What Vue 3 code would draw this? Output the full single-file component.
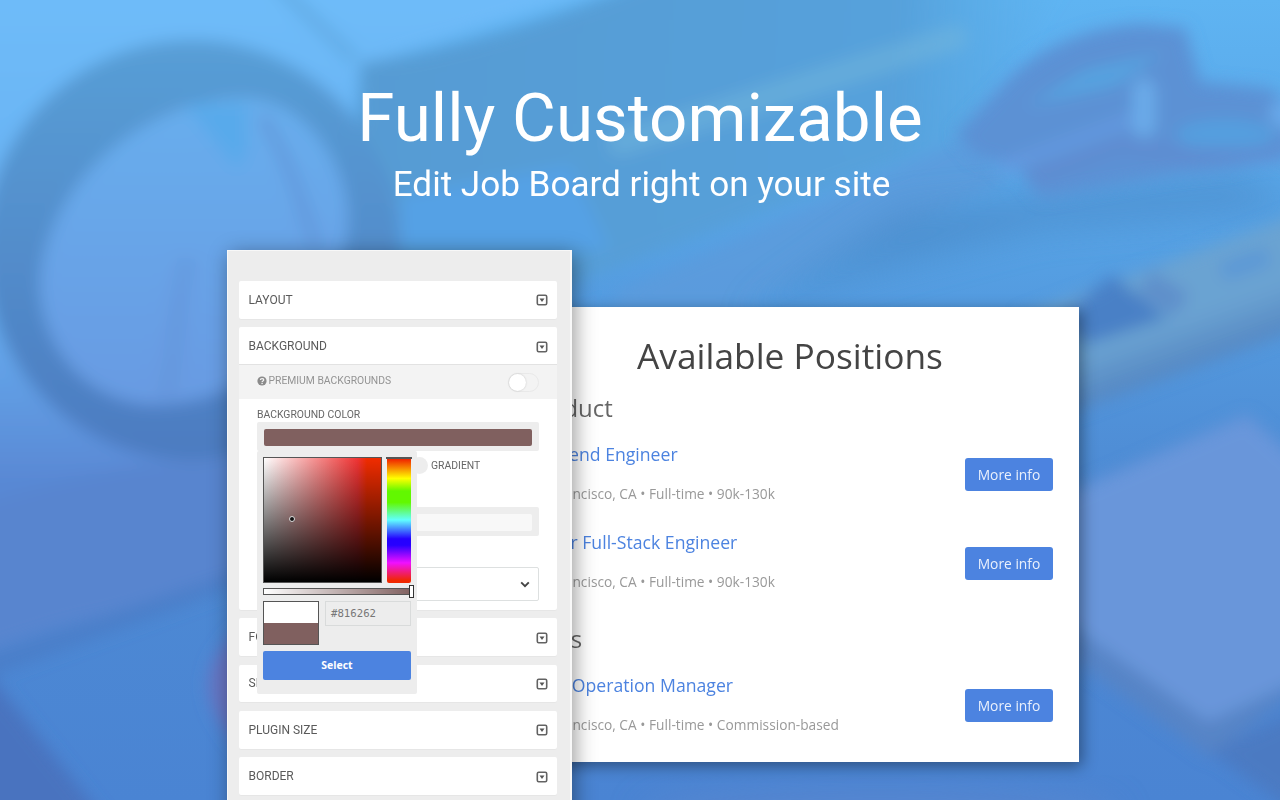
<script setup>
const groups = [
  {
    title: 'Product',
    jobs: [
      { title: 'Frontend Engineer', meta: 'San Francisco, CA • Full-time • 90k-130k' },
      { title: 'Senior Full-Stack Engineer', meta: 'San Francisco, CA • Full-time • 90k-130k' },
    ],
  },
  {
    title: 'Sales',
    jobs: [
      { title: 'Sales Operation Manager', meta: 'San Francisco, CA • Full-time • Commission-based' },
    ],
  },
]
const sections = ['LAYOUT', 'BACKGROUND', 'FONTS', 'SPACING', 'PLUGIN SIZE', 'BORDER']
</script>

<template>
  <main class="page">
    <svg class="backdrop" viewBox="0 0 1280 800" preserveAspectRatio="none" aria-hidden="true">
      <defs>
        <linearGradient id="sky" x1="0" y1="0" x2="0" y2="1">
          <stop offset="0" stop-color="#5fb4f2" />
          <stop offset="0.3" stop-color="#56a1e4" />
          <stop offset="0.6" stop-color="#4e8bd4" />
          <stop offset="1" stop-color="#4a84d3" />
        </linearGradient>
        <linearGradient id="tape" x1="0" y1="0" x2="0" y2="1">
          <stop offset="0" stop-color="#589ed6" />
          <stop offset="1" stop-color="#4c7bc0" />
        </linearGradient>
        <linearGradient id="hole" x1="0" y1="0" x2="0" y2="1">
          <stop offset="0" stop-color="#68aeed" />
          <stop offset="1" stop-color="#689ae2" />
        </linearGradient>
        <linearGradient id="shade" gradientUnits="userSpaceOnUse" x1="360" y1="0" x2="1080" y2="40">
          <stop offset="0" stop-color="#569bd3" />
          <stop offset="0.75" stop-color="#56a1db" />
          <stop offset="1" stop-color="#5bb0ea" stop-opacity="0" />
        </linearGradient>
        <linearGradient id="metal" gradientUnits="userSpaceOnUse" x1="1180" y1="262" x2="1215" y2="362">
          <stop offset="0.5" stop-color="#6ba3d2" />
          <stop offset="0.95" stop-color="#5688c3" />
        </linearGradient>
        <linearGradient id="left" x1="0" y1="0" x2="0" y2="1">
          <stop offset="0" stop-color="#6fbdfa" />
          <stop offset="0.5" stop-color="#67aef0" />
          <stop offset="0.75" stop-color="#5988d4" />
          <stop offset="1" stop-color="#5c8bd5" />
        </linearGradient>
        <filter id="soft" x="-20%" y="-20%" width="140%" height="140%"><feGaussianBlur stdDeviation="8" /></filter>
        <filter id="haze" x="-30%" y="-30%" width="160%" height="160%"><feGaussianBlur stdDeviation="18" /></filter>
      </defs>
      <rect width="1280" height="800" fill="url(#sky)" />
      <g filter="url(#soft)">
        <path d="M-40-40H700L360 66 300 560-40 655Z" fill="url(#left)" />
        <path d="M360 63Q520 40 690-40H1080L960 140 420 340 360 200Z" fill="url(#shade)" />
        <path d="M262-30 355 60" stroke="#60abe4" stroke-width="14" fill="none" opacity=".8" />
        <path d="M400 195 570 165 610 250H400Z" fill="#54a1e5" />
        <path d="M620 143 955 38" stroke="#70b4dc" stroke-width="24" opacity=".6" stroke-linecap="round" />
        <path d="M620 290 960 140 1010 180 730 310H610Z" fill="#5c9bdc" opacity=".85" />
        <path d="M-40 510C70 480 150 450 260 465V560L-40 660Z" fill="#5885cf" />
        <path d="M-40 665 240 568V585L-40 688Z" fill="#4a7bc5" opacity=".7" />
        <path d="M-30 650 105 820H-30Z" fill="#4873bf" />
        <ellipse cx="192" cy="250" rx="208" ry="210" fill="url(#tape)" />
        <path d="M235 98C300 94 342 155 348 210 352 300 270 405 150 405 75 400 32 330 41 268 55 180 140 104 235 98Z" fill="url(#hole)" />
        <path d="M185 104H247V148L238 170Z" fill="#58aaeb" />
        <path d="M262 116C288 158 300 195 316 248" stroke="#6292d6" stroke-width="12" fill="none" opacity=".65" />
        <path d="M188 258C174 310 178 348 165 400" stroke="#6493da" stroke-width="20" fill="none" opacity=".5" />
        <path d="M250 620C190 670 200 705 250 760Z" fill="#6874c2" />
      </g>
      <path d="M740 320 900 212 1240 178 1300 205 1040 228 840 280Z" fill="#4c8ccb" opacity=".8" filter="url(#haze)" />
      <g filter="url(#soft)">
        <path d="M955 135 1010 77Q1060 30 1140 24L1185 28 1200 82 1265 88Q1300 100 1295 145 1265 168 1180 174L1040 199 1018 168 975 158Z" fill="#5b91d4" />
        <path d="M1026 106 1085 70 1165 52 1115 86Z" fill="#57a3e0" />
        <ellipse cx="1225" cy="135" rx="50" ry="16" fill="#549fdf" />
        <path d="M1000 168 1145 115" stroke="#6399df" stroke-width="14" />
        <path d="M1144 90V126" stroke="#6aabe9" stroke-width="23" stroke-linecap="round" />
        <path d="M1275 105 1290 125" stroke="#69aaeb" stroke-width="22" />
        <path d="M1030 178 1120 145 1190 155 1290 155" stroke="#6488cd" stroke-width="16" fill="none" opacity=".5" />
        <path d="M1020 316 1320 206V322L1040 424Z" fill="url(#metal)" />
        <path d="M1060 318 1112 275 1168 318 1085 345Z" fill="#4880c6" />
        <path d="M1145 282 1182 305" stroke="#5f8fcb" stroke-width="26" />
        <path d="M1222 272 1268 256" stroke="#5c98d6" stroke-width="18" />
        <path d="M1040 505 1245 418 1310 475V680L1210 757 1060 650Z" fill="#5784c6" />
        <path d="M1040 505 1247 415 1310 470V675L1208 722 1050 610Z" fill="#6996da" />
        <path d="M1210 752 1320 700V830Z" fill="#4b7ac2" />
      </g>
      <ellipse cx="880" cy="815" rx="240" ry="25" fill="#6689cc" opacity=".5" filter="url(#haze)" />
    </svg>

    <header class="hero">
      <h1>Fully Customizable</h1>
      <p>Edit Job Board right on your site</p>
    </header>

    <div class="stage">
      <aside class="sidebar">
        <section v-for="name in sections" :key="name" class="panel">
          <div class="panel-head">
            <span>{{ name }}</span>
            <svg class="caret" viewBox="0 0 12 12">
              <rect x="1.3" y="1.3" width="9.4" height="9.4" rx="1.4" fill="none" stroke="#636363" stroke-width="1.6" />
              <path d="M3.5 4.4h5L6 7.9Z" fill="#555" />
            </svg>
          </div>
          <div v-if="name === 'BACKGROUND'" class="panel-body">
            <div class="premium">
              <svg class="help" viewBox="0 0 10 10">
                <circle cx="5" cy="5" r="4.6" fill="#8a8a8a" />
                <path d="M3.4 4C3.4 2.1 6.7 2.1 6.7 3.9 6.7 5 5.1 4.9 5.1 6.1" fill="none" stroke="#f3f3f3" stroke-width="1.3" />
                <rect x="4.4" y="6.8" width="1.4" height="1.3" fill="#f3f3f3" />
              </svg>
              <span>PREMIUM BACKGROUNDS</span>
              <i class="switch"></i>
            </div>
            <div class="fields">
              <label>BACKGROUND COLOR</label>
              <div class="well"><div class="fill brown"></div></div>
              <div class="gradient"><i class="knob"></i><span>GRADIENT</span></div>
              <div class="well second"><div class="fill"></div></div>
              <div class="select">
                <svg viewBox="0 0 10 7"><path d="M1.2 1.3 5 5.1 8.8 1.3" fill="none" stroke="#444" stroke-width="1.9" /></svg>
              </div>
              <div class="picker">
                <div class="top">
                  <div class="sat"><i class="cursor"></i></div>
                  <div class="hue"></div>
                </div>
                <div class="alpha"><i class="handle"></i></div>
                <div class="values">
                  <div class="swatch"></div>
                  <div class="hex">#816262</div>
                </div>
                <button class="choose">Select</button>
              </div>
            </div>
          </div>
        </section>
      </aside>

      <article class="board">
        <h2>Available Positions</h2>
        <section v-for="g in groups" :key="g.title" class="group">
          <h3>{{ g.title }}</h3>
          <div v-for="job in g.jobs" :key="job.title" class="job">
            <div>
              <h4>{{ job.title }}</h4>
              <p>{{ job.meta }}</p>
            </div>
            <button class="more">More info</button>
          </div>
        </section>
      </article>
    </div>
  </main>
</template>

<style>
body { margin: 0; overflow: hidden; }
</style>

<style scoped>
* { box-sizing: border-box; }
h1, h2, h3, h4, p { margin: 0; font-weight: 400; }
.page {
  position: relative;
  width: 1280px;
  height: 800px;
  overflow: hidden;
  font-family: Roboto, "Liberation Sans", sans-serif;
}
.backdrop { position: absolute; inset: 0; width: 100%; height: 100%; }
.hero { position: relative; height: 250px; padding-top: 78px; text-align: center; color: #fff; }
.hero h1 { font-size: 67.3px; line-height: 80px; white-space: nowrap; }
.hero p { padding-left: 3px; font-size: 35.1px; line-height: 42px; margin-top: 5px; white-space: nowrap; }
.stage { position: relative; display: flex; align-items: flex-start; padding-left: 227px; }
.sidebar {
  position: relative;
  z-index: 1;
  width: 345px;
  height: 570px;
  padding: 30px 13px 0 11px;
  background: #ededed;
  border: 1px solid #f8f8f8;
  border-width: 1px 2px 0 1px;
  box-shadow: 3px 4px 20px rgba(0, 0, 0, .4);
}
.panel { background: #fff; border-radius: 2px; margin-bottom: 8.4px; box-shadow: 0 1px 1px rgba(0, 0, 0, .03); }
.panel-head {
  display: flex;
  align-items: center;
  justify-content: space-between;
  height: 37.9px;
  padding: 0 9px 0 9.5px;
  font-size: 12px;
  color: #5a5a5a;
}
.caret { width: 12px; height: 12px; margin-top: 1px; }
.panel-body { height: 245.7px; }
.premium {
  display: flex;
  align-items: center;
  height: 35px;
  margin-top: -1px;
  padding: 0 18px 3px 18px;
  background: #f3f3f3;
  border-top: 1px solid #e2e2e2;
  font-size: 10.35px;
  color: #939393;
}
.help { width: 10px; height: 10px; margin-right: 1.5px; }
.switch {
  position: relative;
  top: 1.5px;
  width: 31px;
  height: 19px;
  margin-left: auto;
  border: 1px solid #e9e9e9;
  border-radius: 10px;
}
.switch::before, .knob {
  content: "";
  display: block;
  width: 17px;
  height: 17px;
  background: #fff;
  border-radius: 50%;
  box-shadow: 0 0 2px rgba(0, 0, 0, .2);
}
.fields { position: relative; padding: 8px 18.5px 0 18px; font-size: 10.4px; color: #666; }
.fields label { display: block; height: 15px; line-height: 15px; }
.well { height: 29px; padding: 7px 6.5px 5px; background: #ededed; border-radius: 2px; }
.fill { height: 17px; background: #f8f8f8; border-radius: 2px; }
.fill.brown { background: #80605f; }
.gradient { display: flex; align-items: center; gap: 3px; height: 17px; margin: 6px 0 0 154px; }
.knob { background: #ededed; box-shadow: none; }
.well.second { margin-top: 32.5px; }
.select {
  display: flex;
  align-items: center;
  justify-content: flex-end;
  height: 34px;
  margin-top: 31.5px;
  padding-right: 8px;
  border: 1px solid #dde0e0;
  border-radius: 2px;
}
.select svg { width: 10px; height: 7px; }
.picker {
  position: absolute;
  left: 18px;
  top: 52px;
  width: 160px;
  height: 243px;
  padding: 6px 6px 0;
  background: #ededed;
  border-radius: 2px;
}
.top { display: flex; justify-content: space-between; }
.sat {
  position: relative;
  width: 119px;
  height: 126px;
  border: 1px solid #555;
  background: linear-gradient(to top, #000, transparent), linear-gradient(to right, #fff 0%, #f03434 80%, #f02c00 88%);
}
.cursor {
  position: absolute;
  left: 25px;
  top: 58px;
  width: 6px;
  height: 6px;
  background: #111;
  border: 1px solid #ddd;
  border-radius: 50%;
}
.hue {
  position: relative;
  width: 24px;
  height: 126px;
  background: linear-gradient(#f02800 2%, #ffff00 17%, #62f800 27%, #62f800 36%, #60ffff 50%, #2400ff 65%, #2800ff 70%, #f010ff 84%, #f02800 98%);
  border-radius: 0 0 2px 2px;
}
.hue::before { content: ""; position: absolute; left: -1px; right: -1px; top: 0; height: 2px; background: #555; }
.alpha {
  position: relative;
  width: 150px;
  height: 7px;
  margin-top: 5px;
  border: 1px solid #555;
  background: linear-gradient(to right, #fff, #80605f);
}
.handle { position: absolute; right: -2px; top: -4px; width: 5px; height: 13px; background: #fff; border: 1px solid #333; }
.values { display: flex; gap: 6px; margin-top: 6px; }
.swatch { width: 56px; height: 44px; border: 1px solid #555; background: linear-gradient(#fff 50%, #80605f 50%); }
.hex {
  width: 86px;
  height: 25px;
  padding-left: 5px;
  border: 1px solid #d9dbdb;
  font: 10.7px/23px "DejaVu Sans Mono", monospace;
  color: #777;
}
button { display: block; padding: 0; border: 0; color: #fff; background: #4c83e0; border-radius: 2px; }
.choose { width: 148px; height: 29px; margin-top: 5.5px; font: 700 10.5px/29px "Open Sans", "Noto Sans", sans-serif; }
.board {
  width: 579px;
  height: 455px;
  margin: 57px 0 0 -72px;
  padding: 24px 26px 0 25px;
  background: #fff;
  box-shadow: 3px 4px 14px rgba(0, 0, 0, .4);
  font-family: "Open Sans", "Noto Sans", sans-serif;
}
.board h2 { height: 50px; padding-left: 2px; font-size: 35.3px; line-height: 49px; text-align: center; color: #444; white-space: nowrap; }
.board h3 { height: 34px; margin-top: 10px; font-size: 23.9px; line-height: 33px; color: #666; }
.job { display: flex; justify-content: space-between; height: 88.4px; padding-top: 16px; }
.job h4 { height: 26px; font-size: 17.65px; line-height: 26px; color: #4c83e0; }
.job p { height: 20px; margin-top: 17px; font-size: 13.72px; line-height: 20px; color: #999; }
.more {
  width: 88px;
  height: 33px;
  margin-top: 17.2px;
  font: 13.8px/33px "Open Sans", "Noto Sans", sans-serif;
  color: #e9f0fc;
  border-radius: 3px;
}
.group + .group h3 { margin-top: 20.3px; }
</style>
